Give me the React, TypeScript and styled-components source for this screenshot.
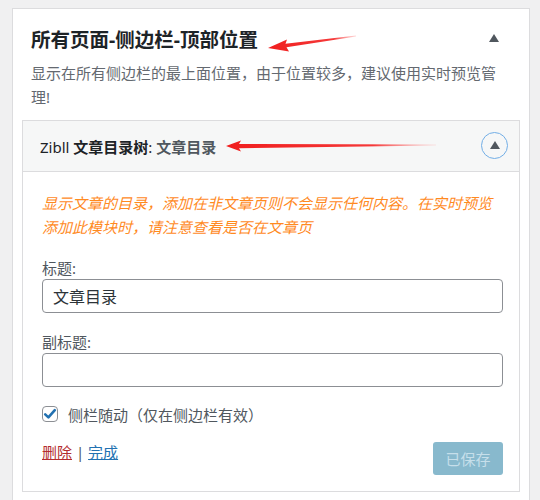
import { FC } from 'react';
import styled, { createGlobalStyle } from 'styled-components';

const GlobalStyle = createGlobalStyle`
    body {
        margin: 0;
        background: #f0f0f1;
        font-family: "Noto Sans", "Noto Sans CJK SC", sans-serif;
        color: #3c434a;
    }
`

const Page = styled.div`
    padding: 8px 0 0 12px;
`

const Panel = styled.div`
    width: 518px;
    box-sizing: border-box;
    background: #fff;
    border: 1px solid #dcdcde;
    border-bottom: none;
    padding-bottom: 20px;
`

const PanelHead = styled.div`
    display: flex;
    align-items: center;
    margin-top: 18px;
    padding-left: 18px;
    height: 26px;
`

const PanelTitle = styled.h2`
    margin: 0;
    font-size: 19.5px;
    line-height: 26px;
    font-weight: 700;
    color: #1d2327;
`

const Spacer = styled.div`
    flex: 1;
`

const Caret = styled.span<{ size: number }>`
    display: inline-block;
    width: 0;
    height: 0;
    border-left: ${p => p.size}px solid transparent;
    border-right: ${p => p.size}px solid transparent;
    border-bottom: ${p => Math.round(p.size * 1.5)}px solid #50575e;
`

const PanelToggle = styled.div`
    width: 16px;
    display: flex;
    justify-content: center;
    margin-right: 27px;
    margin-top: -4px;
`

const PanelDesc = styled.p`
    margin: 9px 0 0;
    padding: 0 31px 0 18px;
    font-size: 15px;
    line-height: 23.5px;
    color: #646970;
`

const Card = styled.div`
    margin: 11px 9px 0;
    border: 1px solid #dcdcde;
    background: #fff;
`

const CardHead = styled.div`
    height: 50px;
    display: flex;
    align-items: center;
    padding: 0 11px 0 17px;
    background: #f6f7f7;
    border-bottom: 1px solid #dcdcde;
`

const CardTitle = styled.h3`
    margin: 0;
    font-size: 15px;
    font-weight: 400;
    color: #1d2327;
    white-space: nowrap;
`

const Strong = styled.span<{ muted?: boolean }>`
    font-weight: 700;
    color: ${p => (p.muted ? '#50575e' : '#1d2327')};
`

const RoundToggle = styled.button`
    width: 27px;
    height: 27px;
    padding: 0;
    border-radius: 50%;
    border: 1.5px solid #72aee6;
    background: transparent;
    display: flex;
    align-items: center;
    justify-content: center;
    margin-top: -1px;
    span {
        margin-top: -2px;
    }
`

const CardBody = styled.div`
    padding: 19px 16px 16px 19px;
`

const Notice = styled.p`
    margin: 0;
    font-size: 15px;
    line-height: 24px;
    font-style: italic;
    color: #ff8a1f;
`

const Field = styled.div`
    margin-top: 18px;
`

const Label = styled.label`
    display: block;
    font-size: 15px;
    line-height: 22px;
    color: #50575e;
`

const Input = styled.input`
    display: block;
    box-sizing: border-box;
    width: 100%;
    height: 34px;
    margin: 0;
    padding: 0 10px;
    border: 1px solid #8c8f94;
    border-radius: 4px;
    font-family: "Noto Sans", "Noto Sans CJK SC", sans-serif;
    font-size: 16px;
    color: #2c3338;
    background: #fff;
    outline: none;
`

const CheckRow = styled.div`
    display: flex;
    align-items: center;
    gap: 10px;
    margin-top: 16px;
    height: 22px;
    font-size: 15px;
    color: #50575e;
`

const CheckBox = styled.span`
    width: 16px;
    height: 16px;
    box-sizing: border-box;
    border: 1px solid #8c8f94;
    border-radius: 4px;
    display: flex;
    align-items: center;
    justify-content: center;
`

const Footer = styled.div`
    display: flex;
    align-items: flex-start;
    justify-content: space-between;
    margin-top: 17px;
`

const Links = styled.div`
    font-size: 15px;
    line-height: 20px;
    color: #50575e;
`

const TextLink = styled.a<{ danger?: boolean }>`
    color: ${p => (p.danger ? '#b32d2e' : '#2271b1')};
    text-decoration: underline;
    cursor: pointer;
`

const SaveBtn = styled.button`
    width: 70px;
    height: 33px;
    border: none;
    border-radius: 3px;
    background: #88b9cd;
    color: #c6dfea;
    font-family: "Noto Sans", "Noto Sans CJK SC", sans-serif;
    font-size: 15px;
`

const ArrowSvg = styled.svg`
    flex: none;
    display: block;
`

// annotation arrows

const BigArrow: FC = () => (
    <ArrowSvg width="92" height="20" viewBox="0 0 92 20" style={{ marginLeft: 8, marginTop: 4 }}>
        <defs>
            <linearGradient id="ga" x1="0" y1="0" x2="1" y2="0">
                <stop offset="0" stopColor="#f01e1e" />
                <stop offset="0.75" stopColor="#f53a3a" />
                <stop offset="1" stopColor="#ff8080" stopOpacity="0.3" />
            </linearGradient>
        </defs>
        <polygon points="2,16 21,7.5 19.5,11.8 90,3.4 90,4.4 20.5,15.3 23,19.5" fill="url(#ga)" />
    </ArrowSvg>
);

const LongArrow: FC = () => (
    <ArrowSvg width="214" height="14" viewBox="0 0 214 14" style={{ marginLeft: 8 }}>
        <defs>
            <linearGradient id="gb" x1="0" y1="0" x2="1" y2="0">
                <stop offset="0" stopColor="#f01e1e" />
                <stop offset="0.7" stopColor="#f53838" />
                <stop offset="1" stopColor="#ff9090" stopOpacity="0.2" />
            </linearGradient>
        </defs>
        <polygon points="2,7 17,1.5 15,5 212,5.6 212,6.4 15,9.3 17,12.5" fill="url(#gb)" />
    </ArrowSvg>
);

const App: FC = () => {
    return (
        <Page>
            <GlobalStyle />
            <Panel>
                <PanelHead>
                    <PanelTitle>所有页面-侧边栏-顶部位置</PanelTitle>
                    <BigArrow />
                    <Spacer />
                    <PanelToggle>
                        <Caret size={5} />
                    </PanelToggle>
                </PanelHead>
                <PanelDesc>显示在所有侧边栏的最上面位置，由于位置较多，建议使用实时预览管理!</PanelDesc>

                <Card>
                    <CardHead>
                        <CardTitle>
                            Zibll <Strong>文章目录树</Strong>: <Strong muted>文章目录</Strong>
                        </CardTitle>
                        <LongArrow />
                        <Spacer />
                        <RoundToggle>
                            <Caret size={5} />
                        </RoundToggle>
                    </CardHead>
                    <CardBody>
                        <Notice>显示文章的目录，添加在非文章页则不会显示任何内容。在实时预览添加此模块时，请注意查看是否在文章页</Notice>
                        <Field>
                            <Label>标题:</Label>
                            <Input defaultValue="文章目录" />
                        </Field>
                        <Field>
                            <Label>副标题:</Label>
                            <Input defaultValue="" />
                        </Field>
                        <CheckRow>
                            <CheckBox>
                                <svg width="14" height="14" viewBox="0 0 14 14">
                                    <path d="M2.2 7.4 L5.4 10.4 L11.8 3.2" fill="none" stroke="#2271b1" strokeWidth="2.6" strokeLinecap="round" strokeLinejoin="round" />
                                </svg>
                            </CheckBox>
                            侧栏随动（仅在侧边栏有效）
                        </CheckRow>
                        <Footer>
                            <Links>
                                <TextLink danger>删除</TextLink> | <TextLink>完成</TextLink>
                            </Links>
                            <SaveBtn disabled>已保存</SaveBtn>
                        </Footer>
                    </CardBody>
                </Card>
            </Panel>
        </Page>
    );
};

export default App;
